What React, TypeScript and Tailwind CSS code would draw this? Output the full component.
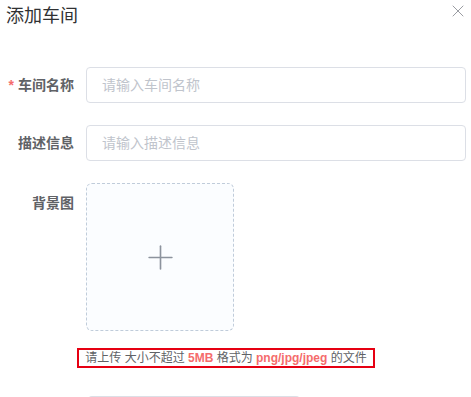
import { X, Plus } from 'lucide-react'

const font = { fontFamily: '"Liberation Sans", "Noto Sans CJK SC", sans-serif' }

function Field({ label, required, placeholder }: { label: string; required?: boolean; placeholder: string }) {
  return (
    <div className="flex items-center">
      <label className="w-[86px] pr-[12px] text-right text-[14px] font-bold text-[#606266]">
        {required && <span className="mr-[4px] text-[#f56c6c]">*</span>}
        {label}
      </label>
      <input
        className="h-[36px] w-[380px] rounded-[4px] border border-[#dcdfe6] px-[15px] text-[14px] outline-none placeholder:text-[#c0c4cc]"
        placeholder={placeholder}
      />
    </div>
  )
}

export default function App() {
  return (
    <div className="h-[397px] w-[471px] overflow-hidden bg-white text-[#606266]" style={font}>
      <div className="flex items-start justify-between pl-[6px] pr-[3px] pt-[4px]">
        <h2 className="text-[18px] leading-[24px] text-[#303133]">添加车间</h2>
        <X className="mt-[-3px] h-[20px] w-[20px] text-[#909399]" strokeWidth={1.1} />
      </div>
      <div className="mt-[39px] flex flex-col gap-[22px]">
        <Field label="车间名称" required placeholder="请输入车间名称" />
        <Field label="描述信息" placeholder="请输入描述信息" />
        <div className="flex items-start">
          <label className="w-[86px] pr-[12px] pt-[10px] text-right text-[14px] font-bold leading-[20px] text-[#606266]">
            背景图
          </label>
          <div className="flex h-[148px] w-[148px] items-center justify-center rounded-[6px] border border-dashed border-[#c0ccda] bg-[#fbfdff]">
            <Plus className="h-[39px] w-[39px] text-[#8c939d]" strokeWidth={1} />
          </div>
        </div>
      </div>
      <div className="ml-[77px] mt-[17px] flex h-[20px] w-[298px] items-center justify-center border-2 border-[#e60012] text-[12px] text-[#606266]">
        请上传 大小不超过&nbsp;<b className="text-[#f56c6c]">5MB</b>&nbsp;格式为&nbsp;<b className="text-[#f56c6c]">png/jpg/jpeg</b>&nbsp;的文件
      </div>
      <div className="ml-[88px] mt-[28px] h-[10px] w-[212px] rounded-t-[4px] border-t border-[#dcdfe6]" />
    </div>
  )
}
